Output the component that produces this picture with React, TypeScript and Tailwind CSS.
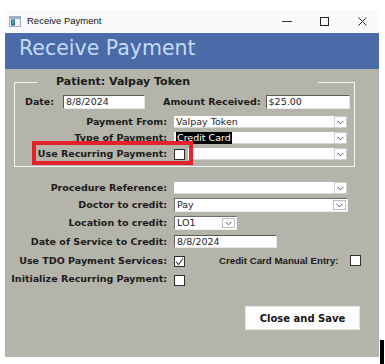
import React from "react";

const label = "font-['DejaVu_Sans',sans-serif] font-bold text-[9.5px] leading-[12px] text-[#1b1b1b] whitespace-nowrap";
const value = "font-['DejaVu_Sans',sans-serif] text-[9.5px] leading-[12px] text-[#1e1e2a] whitespace-nowrap";

function Chevron() {
  return (
    <svg width="7" height="5" viewBox="0 0 7 5">
      <polyline points="0.5,0.8 3.5,3.8 6.5,0.8" fill="none" stroke="#4d5470" strokeWidth="1" />
    </svg>
  );
}

// white field + separate arrow button (older style combos)
function FlatSelect({ w, text, highlight }: { w: number; text?: string; highlight?: boolean }) {
  return (
    <div className="flex h-[12px]" style={{ width: w }}>
      <div className="flex-1 bg-white border-b border-[#d8d8d2] flex items-center pl-[2px]">
        {text && (
          <span className={`${value} ${highlight ? "bg-black text-white px-[1px]" : ""}`}>{text}</span>
        )}
      </div>
      <div className="w-[13px] bg-white border border-[#cfcfcf] flex items-center justify-center">
        <Chevron />
      </div>
    </div>
  );
}

// sunken box with arrow button inside
function InsetSelect({ w, text }: { w: number; text: string }) {
  return (
    <div
      className="flex h-[14px] bg-white border border-t-[#6e6e6e] border-l-[#6e6e6e] border-r-[#ededed] border-b-[#ededed]"
      style={{ width: w }}
    >
      <div className="flex-1 flex items-center pl-[2px]">
        <span className={value}>{text}</span>
      </div>
      <div className="w-[13px] my-[1px] mr-[1px] border border-[#bdbdbd] flex items-center justify-center">
        <Chevron />
      </div>
    </div>
  );
}

function TextBox({ w, text, h = 14 }: { w: number; text: string; h?: number }) {
  return (
    <div
      className="bg-white border border-t-[#5a5a5a] border-l-[#5a5a5a] border-r-[#e6e6e6] border-b-[#e6e6e6] flex items-center pl-[2px]"
      style={{ width: w, height: h }}
    >
      <span className={value}>{text}</span>
    </div>
  );
}

function Check({ checked }: { checked?: boolean }) {
  return (
    <div className="w-[11px] h-[11px] bg-white border border-[#2e2e2e] flex items-center justify-center">
      {checked && (
        <svg width="9" height="9" viewBox="0 0 9 9">
          <polyline points="1,4.5 3.5,7.5 8,1.5" fill="none" stroke="#3a3a3a" strokeWidth="1.1" />
        </svg>
      )}
    </div>
  );
}

function Row({ text, children, className = "" }: { text: string; children: React.ReactNode; className?: string }) {
  return (
    <div className={`flex items-center ${className}`}>
      <div className={`w-[162px] text-right ${label}`}>{text}</div>
      <div className="ml-[7px] flex items-center">{children}</div>
    </div>
  );
}

export default function App() {
  return (
    <div className="h-[364px] w-[385px] overflow-hidden bg-white flex pt-[10px] pl-[5px]">
      <div className="w-[374px] flex flex-col">
        {/* title bar */}
        <div className="h-[23px] bg-[#fafafd] flex items-center pl-[4px] pr-[12px]">
          <svg width="12" height="11" viewBox="0 0 12 11">
            <rect x="0.5" y="0.5" width="11" height="10" fill="#eef2f8" stroke="#a7adb8" />
            <rect x="1" y="1" width="10" height="2" fill="#8fb0d8" />
            <rect x="2" y="3.5" width="4" height="6" fill="#2d7080" />
            <rect x="3" y="4.5" width="2" height="3" fill="#4fb0a0" />
          </svg>
          <span className="ml-[6px] font-['Liberation_Sans',sans-serif] text-[9.5px] text-[#111]">Receive Payment</span>
          <div className="flex-1" />
          <div className="w-[10px] h-[1px] bg-[#333]" />
          <div className="ml-[28px] w-[9px] h-[9px] border border-[#222]" />
          <svg className="ml-[29px]" width="9" height="9" viewBox="0 0 9 9">
            <path d="M0.5 0.5 L8.5 8.5 M8.5 0.5 L0.5 8.5" stroke="#222" strokeWidth="1" />
          </svg>
        </div>

        {/* blue header */}
        <div className="h-[36px] bg-[#4a6aa8] pt-[5px] pl-[14px]">
          <div className="font-['DejaVu_Sans',sans-serif] text-[20.5px] leading-[20px] text-[#c4daf6]">Receive Payment</div>
        </div>

        {/* body */}
        <div className="bg-[#b4b4aa] pb-[27px]">
          <fieldset className="ml-[9px] mt-[6px] w-[341px] border border-[#f6f6f2] pt-[6px] pb-[6px]">
            <legend className="ml-[22px] w-[281px] pl-[19px] font-['DejaVu_Sans',sans-serif] font-bold text-[11px] leading-[14px] text-[#1b1b1b]">
              Patient: Valpay Token
            </legend>
            <div className="flex items-center pl-[10px] mb-[7px]">
              <span className={label}>Date:</span>
              <div className="ml-[9px]">
                <TextBox w={82} text="8/8/2024" />
              </div>
              <span className={`${label} ml-[18px]`}>Amount Received:</span>
              <div className="ml-[5px]">
                <TextBox w={84} text="$25.00" />
              </div>
            </div>
            <div className="grid grid-cols-[152px_173px] gap-x-[7px] gap-y-[4px] items-center">
              <div className={`${label} text-right`}>Payment From:</div>
              <FlatSelect w={173} text="Valpay Token" />
              <div className={`${label} text-right`}>Type of Payment:</div>
              <FlatSelect w={173} text="Credit Card" highlight />
              <div className={`${label} text-right relative`}>
                Use Recurring Payment:
                <div className="absolute left-[17px] top-[-7px] w-[161px] h-[24px] border-[4px] border-[#e3222b]" />
              </div>
              <div className="flex items-center">
                <Check />
                <div className="ml-[3px]">
                  <FlatSelect w={159} />
                </div>
              </div>
            </div>
          </fieldset>

          <Row text="Procedure Reference:" className="mt-[15px]">
            <FlatSelect w={173} />
          </Row>
          <Row text="Doctor to credit:" className="mt-[4px]">
            <InsetSelect w={174} text="Pay" />
          </Row>
          <Row text="Location to credit:" className="mt-[4px]">
            <InsetSelect w={63} text="LO1" />
          </Row>
          <Row text="Date of Service to Credit:" className="mt-[5px]">
            <TextBox w={103} h={13} text="8/8/2024" />
          </Row>
          <Row text="Use TDO Payment Services:" className="mt-[6px]">
            <div className="mt-[2px]">
              <Check checked />
            </div>
            <span className="ml-[34px] font-['Liberation_Sans',sans-serif] font-bold text-[9.7px] leading-[12px] text-[#1b1b1b] whitespace-nowrap">
              Credit Card Manual Entry:
            </span>
            <div className="ml-[11px]">
              <Check />
            </div>
          </Row>
          <Row text="Initialize Recurring Payment:" className="mt-[5px]">
            <div className="mt-[3px]">
              <Check />
            </div>
          </Row>

          <div className="flex justify-end pr-[19px] mt-[20px]">
            <button className="w-[115px] h-[24px] bg-[#fdfdfd] border border-[#e4e4e0] font-['DejaVu_Sans',sans-serif] font-bold text-[10px] text-[#161616]">
              Close and Save
            </button>
          </div>
        </div>
      </div>
      <div className="mt-[330px] ml-[1px] w-[4px] h-[24px] bg-black" />
    </div>
  );
}
